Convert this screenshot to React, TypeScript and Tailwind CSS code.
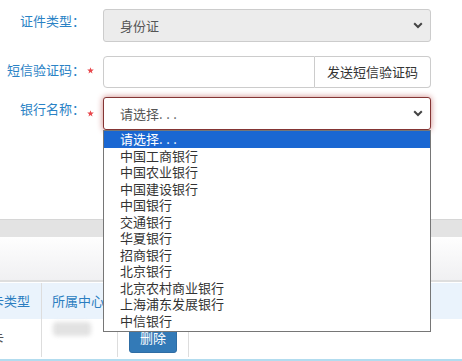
import React from 'react';

const banks = [
  '中国工商银行',
  '中国农业银行',
  '中国建设银行',
  '中国银行',
  '交通银行',
  '华夏银行',
  '招商银行',
  '北京银行',
  '北京农村商业银行',
  '上海浦东发展银行',
  '中信银行',
];

function Chevron() {
  return (
    <svg width="10" height="7" viewBox="0 0 10 7" className="shrink-0">
      <path d="M1.2 1.3 L5 5 L8.8 1.3" fill="none" stroke="#444" strokeWidth="2" />
    </svg>
  );
}

function Star() {
  return (
    <svg width="7" height="7" viewBox="0 0 10 10">
      <path
        d="M5 0.3 L6.2 3.6 L9.7 3.7 L6.9 5.9 L7.9 9.4 L5 7.3 L2.1 9.4 L3.1 5.9 L0.3 3.7 L3.8 3.6 Z"
        fill="#e8474c"
      />
    </svg>
  );
}

function Dots() {
  return <span className="tracking-[3.5px]">...</span>;
}

export default function App() {
  return (
    <div
      className="relative w-[462px] h-[361px] overflow-hidden bg-white text-[13px]"
      style={{ fontFamily: '"Noto Sans CJK SC", "Liberation Sans", sans-serif' }}
    >
      {/* form */}
      <div className="h-[219px] flex flex-col">
        {/* row 1 */}
        <div className="mt-[9px] flex items-start h-[33px]">
          <div className="w-[85px] pt-[3px] text-right text-[#2a82c5] leading-[18px]">证件类型：</div>
          <div className="w-[18px]" />
          <div className="w-[328px] h-[33px] flex items-center justify-between pl-[16px] pr-[7px] bg-[#ececec] border border-[#cccccc] rounded-[3px] text-[#555]">
            <span>身份证</span>
            <Chevron />
          </div>
        </div>
        {/* row 2 */}
        <div className="mt-[14px] flex items-start h-[32px]">
          <div className="w-[85px] pt-[5px] text-right text-[#2a82c5] leading-[18px]">短信验证码：</div>
          <div className="w-[18px] pt-[11px] pl-[2px] flex">
            <Star />
          </div>
          <div className="w-[328px] h-[32px] flex">
            <div className="w-[212px] h-full border border-[#cccccc] rounded-l-[4px] bg-white" />
            <div className="flex-1 h-full flex items-center justify-center border border-l-0 border-[#cccccc] rounded-r-[4px] bg-white text-[#333]">
              发送短信验证码
            </div>
          </div>
        </div>
        {/* row 3 */}
        <div className="mt-[9px] flex items-start h-[33px]">
          <div className="w-[85px] pt-[3px] text-right text-[#2a82c5] leading-[18px]">银行名称：</div>
          <div className="w-[18px] pt-[13px] pl-[2px] flex">
            <Star />
          </div>
          <div className="w-[328px] h-[33px] flex items-center justify-between pl-[16px] pr-[7px] bg-white border border-[#843534] rounded-[3px] text-[#555] shadow-[0_0_6px_#ce8483]">
            <span>
              请选择<Dots />
            </span>
            <Chevron />
          </div>
        </div>
      </div>

      {/* background page bands */}
      <div className="h-[18px] bg-[#e3e3e3] border-t border-[#d6d6d6]" />
      <div className="h-[43px] bg-gradient-to-b from-[#fefefe] to-[#f0f0f2]" />
      <div className="h-[3px] border-t-2 border-[#dedede] bg-white" />

      {/* table */}
      <div className="flex flex-col">
        <div className="flex h-[36px] bg-[#eaf3fc] text-[#2b7dc0]">
          <div className="w-[42px] border-r border-[#dddddd] overflow-hidden flex items-center">
            <span className="ml-[-9px] whitespace-nowrap">卡类型</span>
          </div>
          <div className="w-[76px] border-r border-[#dddddd] flex items-center pl-[10px] whitespace-nowrap overflow-hidden">
            所属中心
          </div>
          <div className="w-[71px] border-r border-[#dddddd]" />
          <div className="flex-1" />
        </div>
        <div className="flex h-[38px] bg-white text-[#555]">
          <div className="w-[42px] border-r border-[#dddddd] overflow-hidden flex items-center">
            <span className="ml-[-35px] whitespace-nowrap">储蓄卡</span>
          </div>
          <div className="w-[76px] border-r border-[#dddddd] flex items-start pt-[3px] pl-[11px]">
            <div className="w-[38px] h-[14px] bg-[#e2e2e2] rounded-[4px] blur-[2px]" />
          </div>
          <div className="w-[71px] border-r border-[#dddddd] flex items-start pt-[3px] pl-[11px]">
            <div className="w-[48px] h-[31px] flex items-center justify-center bg-[#337ab7] border border-[#2e6da4] rounded-[3px] text-white">
              删除
            </div>
          </div>
          <div className="flex-1" />
        </div>
        <div className="h-[2px] bg-white" />
        <div className="h-[2px] bg-[#b2dcef]" />
      </div>

      {/* open select list */}
      <div className="absolute left-[103px] top-[130px] w-[328px] h-[202px] bg-white border border-[#767676] text-[#333]">
        <div className="h-[16.5px] leading-[16.5px] pl-[16px] bg-[#1a67d2] text-white whitespace-nowrap">
          请选择<Dots />
        </div>
        {banks.map((b) => (
          <div key={b} className="h-[16.5px] leading-[16.5px] pl-[16px] whitespace-nowrap">
            {b}
          </div>
        ))}
      </div>
    </div>
  );
}
